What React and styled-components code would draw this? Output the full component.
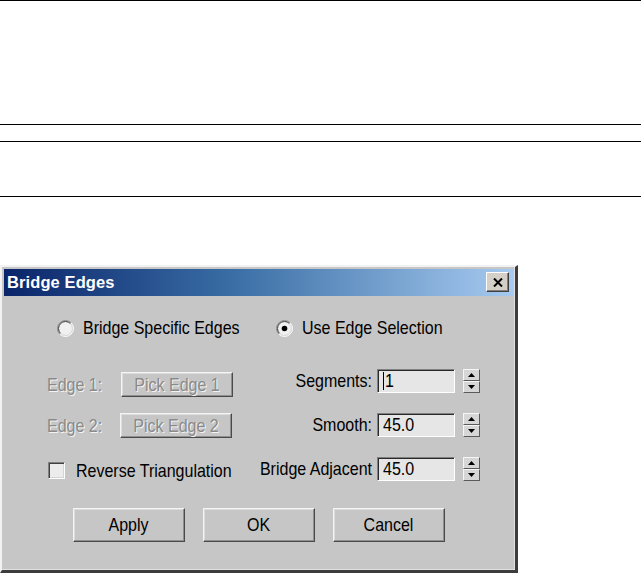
import React from "react";
import styled, { createGlobalStyle } from "styled-components";

const GlobalStyle = createGlobalStyle`
  html, body { margin: 0; padding: 0; background: #ffffff; overflow: hidden; }
  body { font-family: "Liberation Sans", Arial, sans-serif; }
`;

const UI_FONT = `"Liberation Sans", Arial, sans-serif`;

const Page = styled.div`
  width: 641px;
  height: 573px;
  border-top: 1px solid #000;
  box-sizing: border-box;
`;

const Band = styled.div`
  height: ${(p) => p.$h}px;
  border-bottom: 1px solid #000;
`;

const Dialog = styled.div`
  margin-top: 68px;
  width: 518px;
  box-sizing: border-box;
  background: #c6c6c6;
  border-top: 2px solid #f2f2f2;
  border-left: 2px solid #f2f2f2;
  border-right: 3px solid #3c3c3c;
  border-bottom: 3px solid #3c3c3c;
  padding: 2px;
  box-shadow: inset -1px -1px 0 #e2e2e2;
  font-family: ${UI_FONT};
  font-size: 16px;
  color: #000;
`;

const TitleBar = styled.div`
  height: 27px;
  display: flex;
  align-items: center;
  justify-content: space-between;
  padding: 0 4px 1px 3px;
  box-sizing: border-box;
  background: linear-gradient(to right, #0a246a 0%, #3a6ea5 45%, #a6caf0 100%);
`;

const Title = styled.span`
  font-family: "Liberation Sans", Arial, sans-serif;
  font-weight: bold;
  font-size: 16.5px;
  color: #ffffff;
  letter-spacing: 0.1px;
`;

const CloseButton = styled.div`
  width: 23px;
  height: 20px;
  box-sizing: border-box;
  display: flex;
  align-items: center;
  justify-content: center;
  background: #d4d0c8;
  border-top: 1px solid #ffffff;
  border-left: 1px solid #ffffff;
  border-right: 1px solid #404040;
  border-bottom: 1px solid #404040;
  box-shadow: inset -1px -1px 0 #808080;
`;

const Body = styled.div`
  display: flex;
  flex-direction: column;
  padding: 20px 0 26px 0;
`;

const RadioRow = styled.div`
  display: grid;
  grid-template-columns: 219px auto;
  height: 24px;
  padding-left: 53px;
`;

const Option = styled.div`
  display: flex;
  align-items: center;
  gap: 9px;
  white-space: nowrap;
`;

const Label = styled.span`
  display: inline-block;
  line-height: 1;
  white-space: nowrap;
  transform: scaleY(1.2);
  color: ${(p) => (p.$disabled ? "#8a8a8a" : "#000")};
  text-shadow: ${(p) => (p.$disabled ? "1px 1px 0 #f4f4f4" : "none")};
`;

const Columns = styled.div`
  display: grid;
  grid-template-columns: 203px 230px;
  margin: 29px 0 0 43px;
`;

const LeftCol = styled.div`
  display: flex;
  flex-direction: column;
  padding-top: 3px;
`;

const PickRow = styled.div`
  display: grid;
  grid-template-columns: ${(p) => p.$labelWidth}px 112px;
  align-items: center;
  height: 25px;
  margin-top: ${(p) => p.$top || 0}px;
`;

const CheckRow = styled.div`
  display: flex;
  align-items: center;
  gap: 11px;
  height: 25px;
  margin-top: 20px;
  padding-left: 1px;
`;

const CheckBox = styled.div`
  width: 17px;
  height: 17px;
  box-sizing: border-box;
  background: #ececec;
  border-top: 1px solid #808080;
  border-left: 1px solid #808080;
  border-right: 1px solid #ffffff;
  border-bottom: 1px solid #ffffff;
  box-shadow: inset 1px 1px 0 #404040, inset -1px -1px 0 #d4d4d4;
`;

const RightCol = styled.div`
  display: grid;
  grid-template-columns: 1fr 78px 20px;
  grid-template-rows: 24px 24px 24px;
  column-gap: 5px;
  row-gap: 20px;
  align-items: center;
`;

const FieldLabel = styled(Label)`
  justify-self: end;
`;

const NumberField = styled.div`
  height: 24px;
  box-sizing: border-box;
  display: flex;
  align-items: center;
  padding-left: 5px;
  background: #e6e6e6;
  border-top: 1px solid #808080;
  border-left: 1px solid #808080;
  border-right: 1px solid #ffffff;
  border-bottom: 1px solid #ffffff;
  box-shadow: inset 1px 1px 0 #2a2a2a;
  line-height: 1;
`;

const Caret = styled.span`
  display: inline-block;
  width: 1px;
  height: 18px;
  background: #000;
  margin-right: 1px;
`;

const Spinner = styled.div`
  height: 24px;
  display: flex;
  flex-direction: column;
  margin-left: 3px;
  width: 17px;
`;

const SpinHalf = styled.div`
  flex: 1;
  box-sizing: border-box;
  display: flex;
  align-items: center;
  justify-content: center;
  background: #d6d6d6;
  border-top: 1px solid #f6f6f6;
  border-left: 1px solid #f6f6f6;
  border-right: 1px solid #5a5a5a;
  border-bottom: 1px solid #5a5a5a;
`;

const PushButton = styled.div`
  width: 112px;
  height: ${(p) => p.$h || 34}px;
  box-sizing: border-box;
  display: flex;
  align-items: center;
  justify-content: center;
  background: #c6c6c6;
  border-top: 1px solid #f4f4f4;
  border-left: 1px solid #f4f4f4;
  border-right: 1px solid #4a4a4a;
  border-bottom: 1px solid #4a4a4a;
  box-shadow: inset -1px -1px 0 #909090, inset 1px 1px 0 #dcdcdc;
`;

const ButtonRow = styled.div`
  display: flex;
  justify-content: center;
  gap: 18px;
  margin-top: 25px;
`;

function Radio({ checked }) {
  const c = 8.5;
  const r1 = 8;
  const r2 = 7;
  const k = 0.7071;
  const arc = (r, topLeft) =>
    topLeft
      ? `M ${c + r * k} ${c - r * k} A ${r} ${r} 0 0 0 ${c - r * k} ${c + r * k}`
      : `M ${c - r * k} ${c + r * k} A ${r} ${r} 0 0 0 ${c + r * k} ${c - r * k}`;
  return (
    <svg width="17" height="17" viewBox="0 0 17 17">
      <circle cx={c} cy={c} r="7.5" fill="#f0f0f0" />
      <path d={arc(r1, true)} stroke="#8a8a8a" strokeWidth="1" fill="none" />
      <path d={arc(r1, false)} stroke="#ffffff" strokeWidth="1" fill="none" />
      <path d={arc(r2, true)} stroke="#3a3a3a" strokeWidth="1" fill="none" />
      <path d={arc(r2, false)} stroke="#d8d8d8" strokeWidth="1" fill="none" />
      {checked && <circle cx={c} cy={c} r="2.8" fill="#000" />}
    </svg>
  );
}

function Triangle({ up }) {
  return (
    <svg width="7" height="4" viewBox="0 0 7 4">
      <polygon points={up ? "3.5,0 7,4 0,4" : "0,0 7,0 3.5,4"} fill="#000" />
    </svg>
  );
}

function Spin() {
  return (
    <Spinner>
      <SpinHalf>
        <Triangle up />
      </SpinHalf>
      <SpinHalf>
        <Triangle />
      </SpinHalf>
    </Spinner>
  );
}

export default function App() {
  return (
    <>
      <GlobalStyle />
      <Page>
        <Band $h={123} />
        <Band $h={16} />
        <Band $h={54} />
        <Dialog>
          <TitleBar>
            <Title>Bridge Edges</Title>
            <CloseButton>
              <svg width="10" height="9" viewBox="0 0 10 9">
                <path d="M1 0.5 L9 8.5 M9 0.5 L1 8.5" stroke="#000" strokeWidth="2" />
              </svg>
            </CloseButton>
          </TitleBar>
          <Body>
            <RadioRow>
              <Option>
                <Radio />
                <Label>Bridge Specific Edges</Label>
              </Option>
              <Option>
                <Radio checked />
                <Label>Use Edge Selection</Label>
              </Option>
            </RadioRow>
            <Columns>
              <LeftCol>
                <PickRow $labelWidth={74}>
                  <Label $disabled>Edge 1:</Label>
                  <PushButton $h={25}>
                    <Label $disabled>Pick Edge 1</Label>
                  </PushButton>
                </PickRow>
                <PickRow $labelWidth={73} $top={16}>
                  <Label $disabled>Edge 2:</Label>
                  <PushButton $h={25}>
                    <Label $disabled>Pick Edge 2</Label>
                  </PushButton>
                </PickRow>
                <CheckRow>
                  <CheckBox />
                  <Label>Reverse Triangulation</Label>
                </CheckRow>
              </LeftCol>
              <RightCol>
                <FieldLabel>Segments:</FieldLabel>
                <NumberField>
                  <Caret />
                  <Label>1</Label>
                </NumberField>
                <Spin />
                <FieldLabel>Smooth:</FieldLabel>
                <NumberField>
                  <Label>45.0</Label>
                </NumberField>
                <Spin />
                <FieldLabel>Bridge Adjacent</FieldLabel>
                <NumberField>
                  <Label>45.0</Label>
                </NumberField>
                <Spin />
              </RightCol>
            </Columns>
            <ButtonRow>
              <PushButton>
                <Label>Apply</Label>
              </PushButton>
              <PushButton>
                <Label>OK</Label>
              </PushButton>
              <PushButton>
                <Label>Cancel</Label>
              </PushButton>
            </ButtonRow>
          </Body>
        </Dialog>
      </Page>
    </>
  );
}
